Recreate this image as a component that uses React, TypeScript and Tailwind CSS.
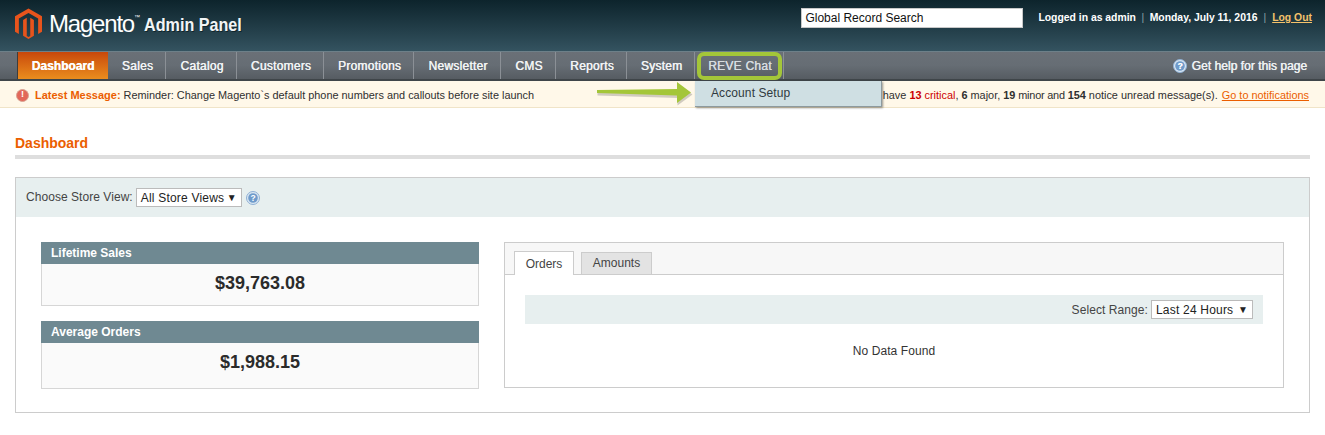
import React from 'react';

const NAV_ITEMS = ['Sales', 'Catalog', 'Customers', 'Promotions', 'Newsletter', 'CMS', 'Reports', 'System'];
const NAV_WIDTHS: Record<string, string> = {
  Sales: 'w-[58px]',
  Catalog: 'w-[71px]',
  Customers: 'w-[87px]',
  Promotions: 'w-[90px]',
  Newsletter: 'w-[87px]',
  CMS: 'w-[55px]',
  Reports: 'w-[71px]',
  System: 'w-[68px]',
};

function MagentoLogo() {
  return (
    <svg width="27" height="32" viewBox="0 0 28 32" className="shrink-0">
      <path d="M14 0 L28 8 V24 L24 26.3 V10.3 L14 4.6 L4 10.3 V26.3 L0 24 V8 Z" fill="#e8541c" />
      <path d="M12.2 9.6 V28.4 L14 29.5 L15.8 28.4 V9.6 L19.6 11.8 V28.2 L14 31.6 L8.4 28.2 V11.8 Z" fill="#e8541c" />
    </svg>
  );
}

function HelpIcon({ size = 14, className = '' }: { size?: number; className?: string }) {
  return (
    <svg width={size} height={size} viewBox="0 0 14 14" className={className}>
      <circle cx="7" cy="7" r="6.5" fill="#dbe7f3" stroke="#8fb0d4" />
      <circle cx="7" cy="7" r="4.8" fill="#6f9bcb" />
      <text x="7" y="10" textAnchor="middle" fontSize="8.5" fontWeight="700" fill="#fff" fontFamily="Liberation Sans, sans-serif">?</text>
    </svg>
  );
}

function GreenArrow() {
  return (
    <svg width="100" height="26" viewBox="0 0 100 26" className="absolute left-[595px] top-[80px]">
      <path d="M2 11 L82 9.5 V2 L97 13 L82 24 V16.5 L2 14 Z" fill="#000" opacity="0.18" transform="translate(0.5 1.5)" />
      <path d="M2 10 L82 9 V2 L96 12.5 L82 23 V15.5 L2 13 Z" fill="#a4c639" />
    </svg>
  );
}

function FakeSelect({ label, className }: { label: string; className: string }) {
  return (
    <div className={`flex items-center justify-between h-[19px] bg-white border border-[#bbbbbb] pl-[4px] pr-[4px] text-[12px] tracking-[0.2px] text-[#222222] ${className}`}>
      <span>{label}</span>
      <span className="text-[10px] leading-none">▼</span>
    </div>
  );
}

function StatBox({ title, value, boxHeight }: { title: string; value: string; boxHeight: string }) {
  return (
    <div>
      <div className="h-[22px] bg-[#6f8992] pl-[10px] flex items-center text-[12px] font-bold text-white">{title}</div>
      <div className={`bg-[#fafafa] border border-t-0 border-[#d6d6d6] flex items-start justify-center pt-[7px] text-[18px] leading-[24px] font-bold text-[#2b2b2b] ${boxHeight}`}>
        {value}
      </div>
    </div>
  );
}

export default function App() {
  return (
    <div className="relative w-[1325px] h-[435px] overflow-hidden bg-white font-['Liberation_Sans',Arial,sans-serif] text-[11px] text-[#2f2f2f]">
      {/* Header */}
      <div className="h-[52px] bg-gradient-to-b from-[#0d242c] to-[#345360] border-b border-[#6d8089] flex items-start pl-[15px] pr-[13px]">
        <div className="flex items-center mt-[8px] gap-[7px]">
          <MagentoLogo />
          <span className="text-[24px] leading-[30px] text-white tracking-[-1.2px]">Magento</span>
          <span className="w-[6px] text-[6px] text-white -ml-[7px] -mt-[14px]">™</span>
          <span className="w-[97px] whitespace-nowrap text-[19px] leading-[30px] font-bold text-[#f2f5f6] mt-[1px] -ml-[3px] scale-x-[0.85] origin-left [text-shadow:1px_1px_0_#10252c]">Admin Panel</span>
        </div>
        <div className="ml-auto flex items-center mt-[8px]">
          <div className="w-[222px] h-[20px] bg-white border border-[#c8c8c8] pl-[3px] flex items-center text-[12px] text-[#111111]">
            Global Record Search
          </div>
          <div className="ml-[15px] flex items-center text-[10.4px] font-bold text-white">
            <span>Logged in as admin</span>
            <span className="mx-[5.5px] font-normal text-[#8ba0a8]">|</span>
            <span>Monday, July 11, 2016</span>
            <span className="mx-[6px] font-normal text-[#8ba0a8]">|</span>
            <span className="text-[#f5c26b] underline">Log Out</span>
          </div>
        </div>
      </div>

      {/* Nav */}
      <div className="h-[29px] bg-gradient-to-b from-[#6a7077] via-[#666d74] to-[#565c62] border-b-2 border-[#3f4549] flex items-stretch pl-[17px] pr-[18px] text-[12px] tracking-[0.25px] text-[#f2f4f5] [text-shadow:0.4px_0_0_#f2f4f5]">
        <div className="w-[91px] bg-gradient-to-b from-[#c8470b] to-[#ea8d1e] border-l border-[#3d3d3d] flex items-center justify-center font-bold tracking-normal text-white">
          Dashboard
        </div>
        {NAV_ITEMS.map((item) => (
          <div key={item} className={`${NAV_WIDTHS[item]} pl-[2px] border-r border-[#8b9096] flex items-center justify-center`}>
            {item}
          </div>
        ))}
        <div className="w-[89px] pl-[2px] border-r border-[#8b9096] flex items-center justify-center tracking-[0.25px] text-[#d7dce0] [text-shadow:0.2px_0_0_#d7dce0]">REVE Chat</div>
        <div className="ml-auto flex items-center gap-[5px] tracking-normal text-[#eef1f3]">
          <HelpIcon />
          <span className="text-[12px] tracking-[0.03px]">Get help for this page</span>
        </div>
      </div>

      {/* Notice */}
      <div className="h-[27px] pt-[2px] bg-[#fff8e9] border-b border-[#f0e4c8] flex items-center pl-[16px] pr-[16px] text-[10.9px]">
        <span className="w-[13px] h-[13px] rounded-full bg-[#e2685a] border border-[#d9a393] text-white text-[9px] font-bold flex items-center justify-center mr-[6px]">!</span>
        <span className="font-bold text-[11px] text-[#eb5e00] mr-[3px]">Latest Message:</span>
        <span>Reminder: Change Magento`s default phone numbers and callouts before site launch</span>
        <div className="ml-auto">
          <span>have </span>
          <span className="font-bold text-[#cc0000]">13</span>
          <span className="text-[#cc0000]"> critical</span>
          <span>, </span>
          <b>6</b> major, <b>19</b><span className="tracking-[-0.2px]"> minor and </span><b>154</b> notice unread message(s).{' '}
          <span className="ml-[1px] text-[#eb5e00] underline">Go to notifications</span>
        </div>
      </div>

      {/* Content */}
      <div className="px-[15px] pt-[26px]">
        <div className="h-[25px] border-b-[4px] border-[#dedede]">
          <h1 className="text-[14px] leading-[18px] font-bold text-[#eb5e00]">Dashboard</h1>
        </div>
        <div className="mt-[18px] h-[236px] border border-[#cccccc]">
          <div className="h-[39px] bg-[#e7efef] pl-[10px] flex items-center text-[12px]">
            <span className="text-[#444444] tracking-[0.05px] -mt-[2px]">Choose Store View:</span>
            <FakeSelect label="All Store Views" className="w-[106px] ml-[3px]" />
            <HelpIcon className="ml-[4px]" />
          </div>
          <div className="flex pl-[25px] pr-[25px] pt-[25px] gap-[25px]">
            <div className="w-[438px] flex flex-col gap-[15px]">
              <StatBox title="Lifetime Sales" value="$39,763.08" boxHeight="h-[42px]" />
              <StatBox title="Average Orders" value="$1,988.15" boxHeight="h-[46px]" />
            </div>
            <div className="w-[780px] h-[146px] border border-[#cccccc]">
              <div className="h-[32px] bg-[#f7f7f7] border-b border-[#cccccc] flex items-end pl-[9px] gap-[7px] text-[12px]">
                <div className="w-[60px] h-[24px] -mb-px bg-white border border-b-0 border-[#cccccc] flex items-center justify-center text-[#444444]">Orders</div>
                <div className="w-[71px] h-[22px] pb-[2px] bg-[#e3e3e3] border border-b-0 border-[#cccccc] flex items-center justify-center text-[#444444]">Amounts</div>
              </div>
              <div className="pl-[20px] pr-[20px] pt-[20px]">
                <div className="h-[29px] bg-[#e7efef] flex items-center justify-end pr-[10px] text-[12px]">
                  <span className="text-[#444444] mr-[3px] tracking-[0.08px]">Select Range:</span>
                  <FakeSelect label="Last 24 Hours" className="w-[102px]" />
                </div>
                <div className="mt-[20px] text-center text-[12px] leading-[14px] tracking-[0.1px] text-[#333333]">No Data Found</div>
              </div>
            </div>
          </div>
        </div>
      </div>

      {/* Annotation overlays */}
      <div className="absolute left-[697px] top-[52px] w-[85px] h-[28px] rounded-[7px] border-[4px] border-[#a4c639]" />
      <GreenArrow />
      <div className="absolute left-[695px] top-[81px] w-[187px] h-[26px] bg-[#cfdfe3] border-r border-b border-[#8d9a9f] shadow-[1px_1px_2px_rgba(0,0,0,0.4)] pl-[16px] pt-[3px] text-[12px] tracking-[0.1px] text-[#2f3a40]">
        Account Setup
      </div>
    </div>
  );
}
